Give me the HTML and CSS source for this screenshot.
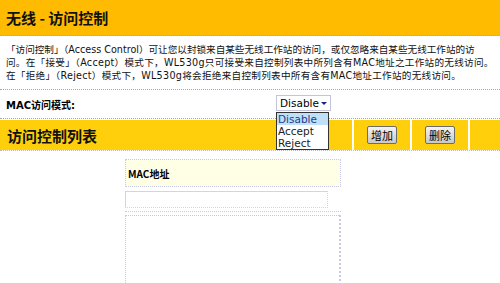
FILE: index.html
```html
<!DOCTYPE html>
<html lang="zh-CN">
<head>
    <meta charset="UTF-8">
    <title>无线 - 访问控制</title>
    <link rel="stylesheet" href="styles.css">
</head>
<body>
<div class="title-bar">
    <h1>无线 - 访问控制</h1>
</div>

<div class="desc">
    <p>「访问控制」（Access Control）可让您以封锁来自某些无线工作站的访问，或仅忽略来自某些无线工作站的访</p>
    <p class="wide">问。在「接受」（Accept）模式下，WL530g只可接受来自控制列表中所列含有MAC地址之工作站的无线访问。</p>
    <p class="wide">在「拒绝」（Reject）模式下，WL530g将会拒绝来自控制列表中所有含有MAC地址工作站的无线访问。</p>
</div>

<div class="mode-row">
    <label class="mode-label">MAC访问模式:</label>
    <div class="select-wrap">
        <div class="select">Disable<span class="arrow"></span></div>
        <ul class="dropdown">
            <li class="active">Disable</li>
            <li>Accept</li>
            <li>Reject</li>
        </ul>
    </div>
</div>

<div class="list-bar">
    <div class="cell cell-title">访问控制列表</div>
    <div class="cell"><button>增加</button></div>
    <div class="cell"><button>删除</button></div>
    <div class="cell"></div>
</div>

<div class="mac-table">
    <div class="mac-head">MAC地址</div>
    <div class="mac-input-row"><input type="text" class="mac-input"></div>
    <div class="mac-list"></div>
</div>
</body>
</html>
```

FILE: styles.css
```css
body {
    margin: 0;
    background: #fff;
    color: #000;
    font-family: "DejaVu Sans", "Noto Sans CJK SC", sans-serif;
    overflow: hidden;
}

.title-bar {
    height: 35px;
    background: #ffbb00;
    padding-left: 6px;
    border-bottom: 1px dotted #aaa;
}

.title-bar h1 {
    margin: 0;
    font-family: "Noto Sans CJK SC", sans-serif;
    font-size: 15px;
    line-height: 35px;
    font-weight: bold;
    color: #111;
}

.desc {
    padding: 7px 0 7px 6px;
    border-bottom: 1px dotted #aaa;
}

.desc p {
    margin: 0;
    font-size: 9.6px;
    line-height: 13px;
    white-space: nowrap;
    color: #111;
}

.desc p.wide {
    letter-spacing: 0.28px;
}

.mode-row {
    display: flex;
    align-items: center;
    height: 28px;
    padding-left: 6px;
    border-bottom: 1px dotted #aaa;
}

.mode-label {
    width: 270px;
    font-size: 10px;
    font-weight: bold;
    margin-top: 1px;
}

.select-wrap {
    position: relative;
    margin-top: -2px;
}

.select {
    display: flex;
    align-items: center;
    justify-content: space-between;
    width: 48px;
    height: 14px;
    padding: 0 2px 0 3px;
    border: 1px solid #c4c4dc;
    font-family: "DejaVu Sans", sans-serif;
    font-size: 10.5px;
    background: #fff;
}

.arrow {
    width: 0;
    height: 0;
    border-left: 3px solid transparent;
    border-right: 3px solid transparent;
    border-top: 3px solid #1a237e;
    margin-right: 1px;
}

.dropdown {
    position: absolute;
    top: 17px;
    left: 0;
    width: 51px;
    margin: 0;
    padding: 0;
    list-style: none;
    border: 1px solid #333;
    background: #fff;
    z-index: 10;
}

.dropdown li {
    height: 12px;
    line-height: 12px;
    padding-left: 1px;
    font-family: "DejaVu Sans", sans-serif;
    font-size: 10.5px;
    color: #222;
}

.dropdown li.active {
    background: #bfe0f8;
    color: #2a3a8a;
}

.list-bar {
    display: flex;
    height: 30px;
    margin-top: 1px;
    border-bottom: 1px dotted #bbb;
}

.cell {
    display: flex;
    align-items: center;
    justify-content: center;
    width: 56px;
    background: #ffcf0c;
    margin-left: 2px;
}

.cell:last-child {
    width: auto;
    flex: 1;
}

.cell-title {
    width: 345px;
    margin-left: 0;
    justify-content: flex-start;
    padding-left: 7px;
    font-family: "Noto Sans CJK SC", sans-serif;
    font-size: 15px;
    font-weight: bold;
    color: #111;
}

.cell button {
    width: 30px;
    height: 18px;
    padding: 0;
    border: 1px solid #6c6c6c;
    border-radius: 2px;
    background: linear-gradient(#f4f4f4, #c8c8c8);
    font-family: "Noto Sans CJK SC", sans-serif;
    font-size: 11px;
    color: #000;
}

.mac-table {
    width: 216px;
    margin: 8px 0 0 125px;
}

.mac-head {
    height: 26px;
    display: flex;
    align-items: center;
    padding-left: 2px;
    background: #ffffe6;
    border: 1px dotted #c8c8e4;
    font-family: "Noto Sans CJK SC", sans-serif;
    font-size: 10px;
    font-weight: bold;
}

.mac-input-row {
    height: 20px;
    margin-top: 2px;
    padding-top: 2px;
    border-bottom: 1px dotted #c8c8e4;
}

.mac-input {
    display: block;
    width: 203px;
    height: 17px;
    margin: 0;
    padding: 0;
    box-sizing: border-box;
    border: 1px solid #d4d4e4;
    border-bottom-style: dotted;
    border-right-style: dotted;
}

.mac-list {
    height: 80px;
    margin-top: 3px;
    border: 1px dotted #c8c8e4;
    border-right-width: 2px;
}
```
